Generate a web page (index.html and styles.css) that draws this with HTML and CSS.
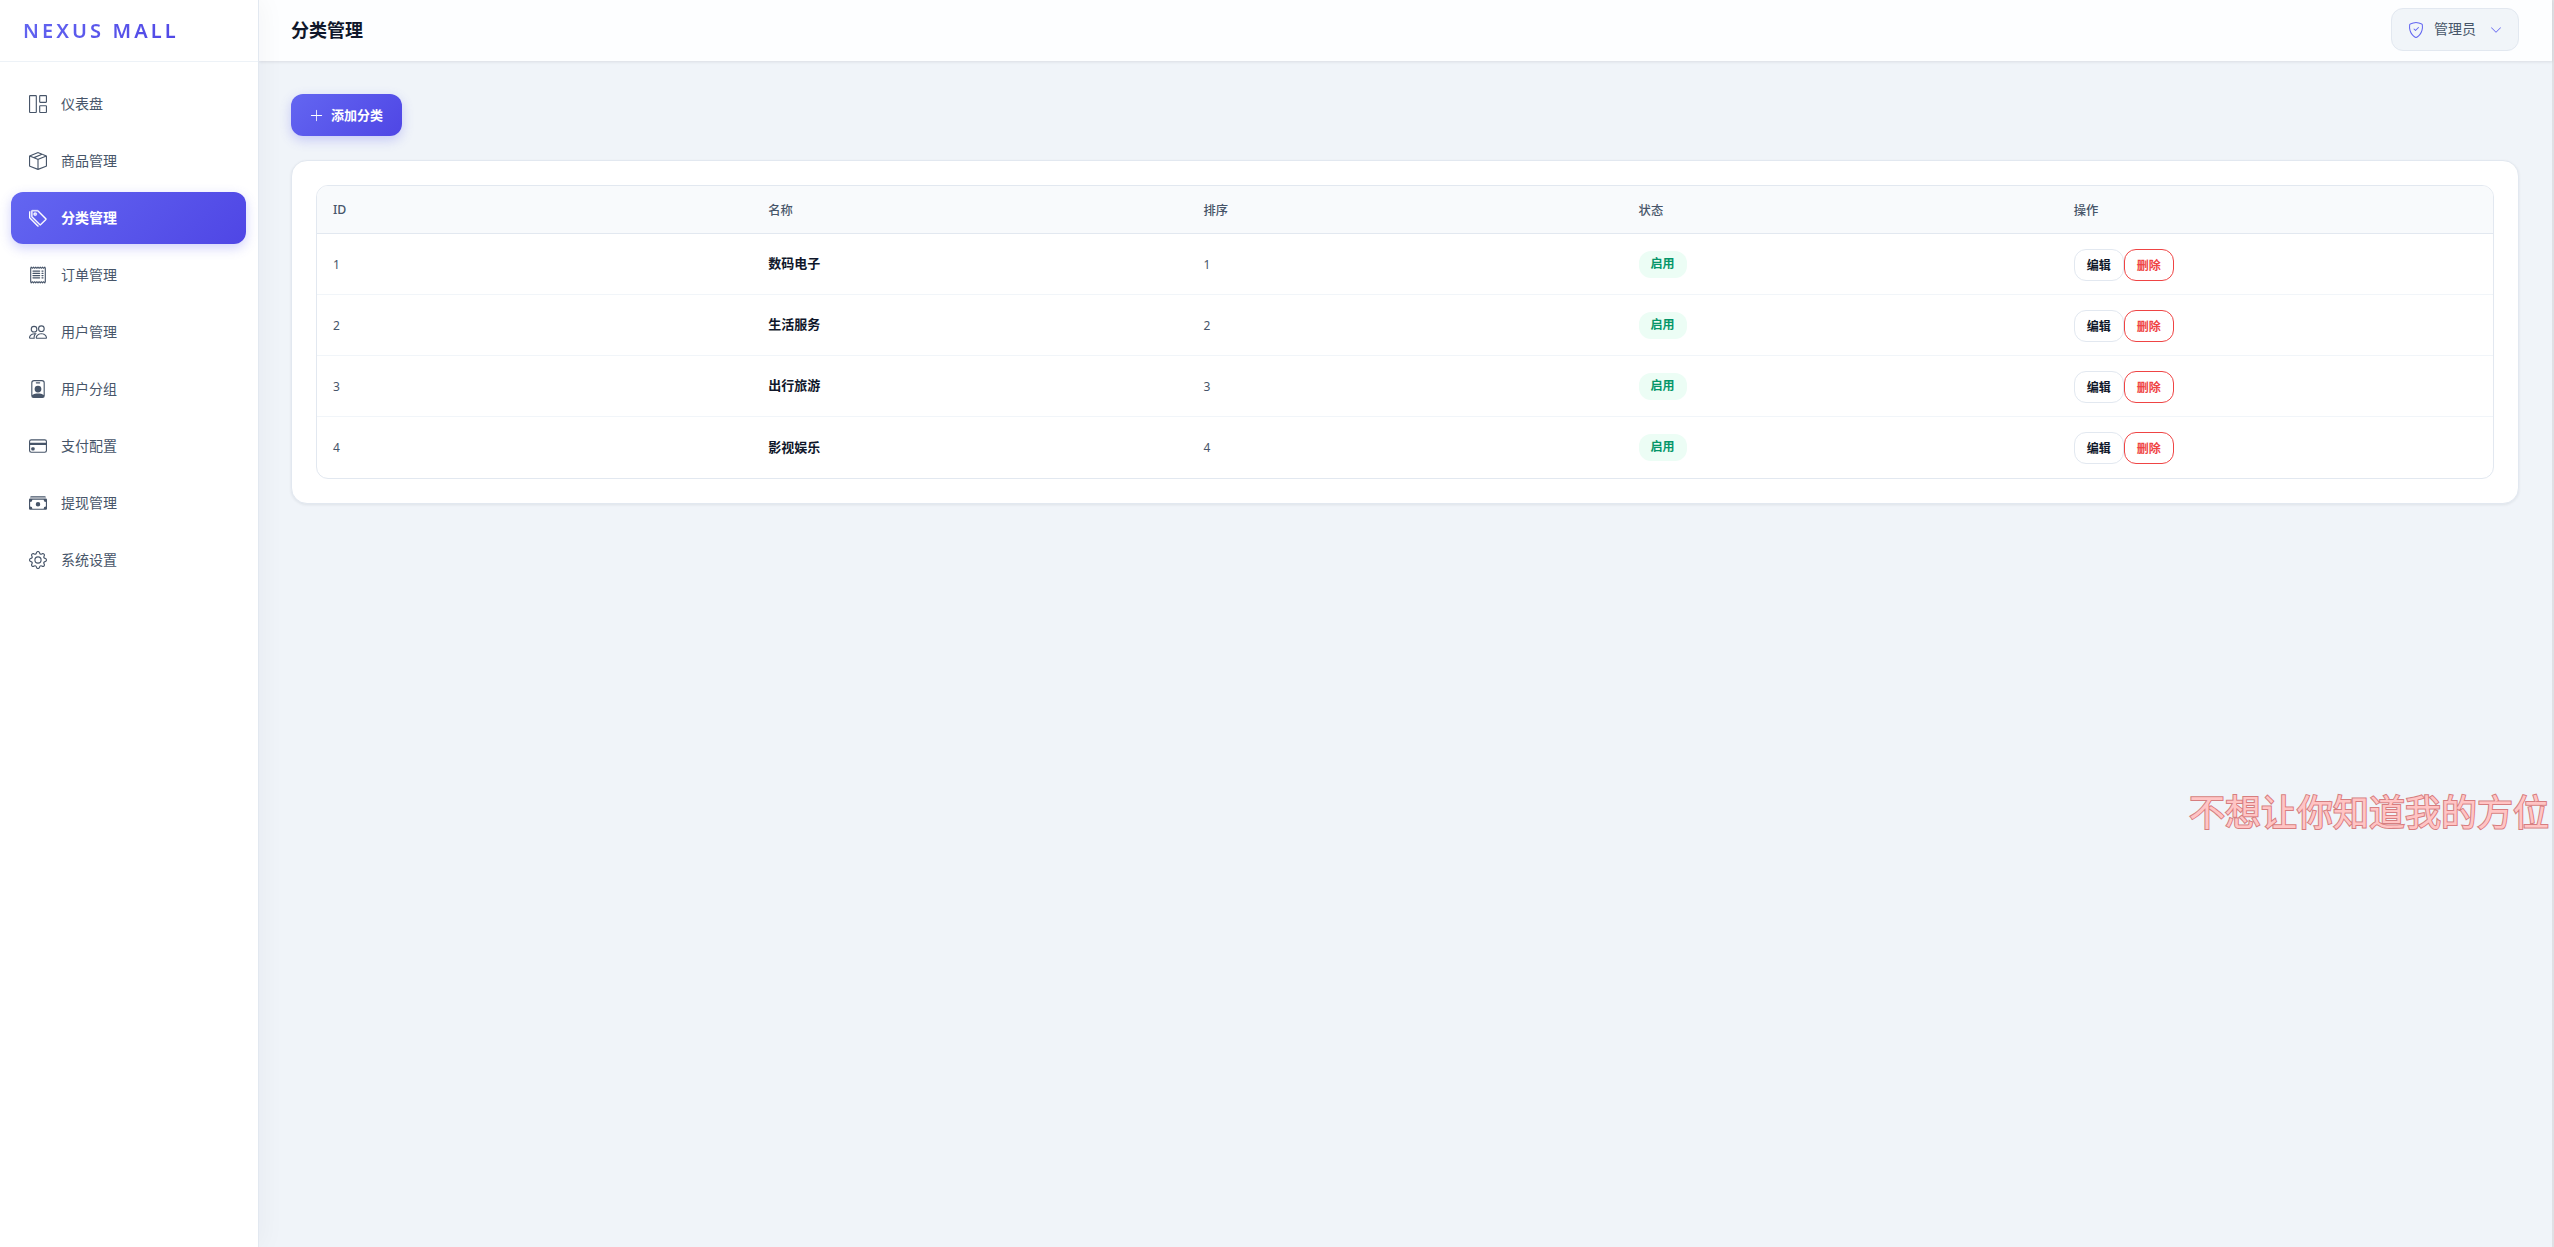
FILE: index.html
```html
<!DOCTYPE html>
<html lang="zh-CN">
<head>
<meta charset="utf-8">
<title>分类管理 - NEXUS MALL</title>
<link rel="stylesheet" href="styles.css">
</head>
<body>
<div class="app">
  <aside class="sidebar">
    <div class="brand"><span class="brand-text">NEXUS MALL</span></div>
    <nav class="nav">
      <a class="nav-item"><svg class="icon" viewBox="0 0 16 16"><path d="M6 1H1v14h5zm9 0h-5v5h5zm0 9v5h-5v-5zM0 1a1 1 0 0 1 1-1h5a1 1 0 0 1 1 1v14a1 1 0 0 1-1 1H1a1 1 0 0 1-1-1zm9 0a1 1 0 0 1 1-1h5a1 1 0 0 1 1 1v5a1 1 0 0 1-1 1h-5a1 1 0 0 1-1-1zm1 8a1 1 0 0 0-1 1v5a1 1 0 0 0 1 1h5a1 1 0 0 0 1-1v-5a1 1 0 0 0-1-1z"/></svg><span>仪表盘</span></a>
      <a class="nav-item"><svg class="icon" viewBox="0 0 16 16"><path d="M8.186 1.113a.5.5 0 0 0-.372 0L1.846 3.5l2.404.961L10.404 2zm3.564 1.426L5.596 5 8 5.961 14.154 3.5zm3.25 1.7-6.5 2.6v7.922l6.5-2.6V4.24zM7.5 14.762V6.838L1 4.239v7.923zM7.443.184a1.5 1.5 0 0 1 1.114 0l7.129 2.852A.5.5 0 0 1 16 3.5v8.662a1 1 0 0 1-.629.928l-7.185 2.874a.5.5 0 0 1-.372 0L.63 13.09a1 1 0 0 1-.63-.928V3.5a.5.5 0 0 1 .314-.464z"/></svg><span>商品管理</span></a>
      <a class="nav-item active"><svg class="icon" viewBox="0 0 16 16"><path d="M3 2v4.586l7 7L14.586 9l-7-7zM2 2a1 1 0 0 1 1-1h4.586a1 1 0 0 1 .707.293l7 7a1 1 0 0 1 0 1.414l-4.586 4.586a1 1 0 0 1-1.414 0l-7-7A1 1 0 0 1 2 6.586z"/><path d="M5.5 5a.5.5 0 1 1 0-1 .5.5 0 0 1 0 1m0 1a1.5 1.5 0 1 0 0-3 1.5 1.5 0 0 0 0 3M1 7.086a1 1 0 0 0 .293.707L8.75 15.25l-.043.043a1 1 0 0 1-1.414 0l-7-7A1 1 0 0 1 0 7.586V3a1 1 0 0 1 1-1z"/></svg><span>分类管理</span></a>
      <a class="nav-item"><svg class="icon" viewBox="0 0 16 16"><path d="M1.92.506a.5.5 0 0 1 .434.14L3 1.293l.646-.647a.5.5 0 0 1 .708 0L5 1.293l.646-.647a.5.5 0 0 1 .708 0L7 1.293l.646-.647a.5.5 0 0 1 .708 0L9 1.293l.646-.647a.5.5 0 0 1 .708 0l.646.647.646-.647a.5.5 0 0 1 .708 0l.646.647.646-.647a.5.5 0 0 1 .801.13l.5 1A.5.5 0 0 1 15 2v12a.5.5 0 0 1-.053.224l-.5 1a.5.5 0 0 1-.8.13L13 14.707l-.646.647a.5.5 0 0 1-.708 0L11 14.707l-.646.647a.5.5 0 0 1-.708 0L9 14.707l-.646.647a.5.5 0 0 1-.708 0L7 14.707l-.646.647a.5.5 0 0 1-.708 0L5 14.707l-.646.647a.5.5 0 0 1-.708 0L3 14.707l-.646.647a.5.5 0 0 1-.801-.13l-.5-1A.5.5 0 0 1 1 14V2a.5.5 0 0 1 .053-.224l.5-1a.5.5 0 0 1 .367-.27m.217 1.338L2 2.118v11.764l.137.274.51-.51a.5.5 0 0 1 .707 0l.646.647.646-.646a.5.5 0 0 1 .708 0l.646.646.646-.646a.5.5 0 0 1 .708 0l.646.646.646-.646a.5.5 0 0 1 .708 0l.646.646.646-.646a.5.5 0 0 1 .708 0l.646.646.646-.646a.5.5 0 0 1 .708 0l.509.509.137-.274V2.118l-.137-.274-.51.51a.5.5 0 0 1-.707 0L12 1.707l-.646.647a.5.5 0 0 1-.708 0L10 1.707l-.646.647a.5.5 0 0 1-.708 0L8 1.707l-.646.647a.5.5 0 0 1-.708 0L6 1.707l-.646.647a.5.5 0 0 1-.708 0L4 1.707l-.646.647a.5.5 0 0 1-.708 0z"/><path class="line" d="M3.5 4.5h6m-6 2h6m-6 2h6m-6 2h6m2-6h1m-1 2h1m-1 2h1m-1 2h1"/></svg><span>订单管理</span></a>
      <a class="nav-item"><svg class="icon" viewBox="0 0 16 16"><path d="M15 14s1 0 1-1-1-4-5-4-5 3-5 4 1 1 1 1zm-7.978-1L7 12.996c.001-.264.167-1.03.76-1.72C8.312 10.629 9.282 10 11 10c1.717 0 2.687.63 3.24 1.276.593.69.758 1.457.76 1.72l-.008.002-.014.002zM11 7a2 2 0 1 0 0-4 2 2 0 0 0 0 4m3-2a3 3 0 1 1-6 0 3 3 0 0 1 6 0M6.936 9.28a6 6 0 0 0-1.23-.247A7 7 0 0 0 5 9c-4 0-5 3-5 4q0 1 1 1h4.216A2.24 2.24 0 0 1 5 13c0-1.01.377-2.042 1.09-2.904.243-.294.526-.569.846-.816M4.92 10A5.5 5.5 0 0 0 4 13H1c0-.26.164-1.03.76-1.724.545-.636 1.492-1.256 3.16-1.275ZM1.5 5.5a3 3 0 1 1 6 0 3 3 0 0 1-6 0m3-2a2 2 0 1 0 0 4 2 2 0 0 0 0-4"/></svg><span>用户管理</span></a>
      <a class="nav-item"><svg class="icon" viewBox="0 0 16 16"><path d="M6.5 2a.5.5 0 0 0 0 1h3a.5.5 0 0 0 0-1zM11 8a3 3 0 1 1-6 0 3 3 0 0 1 6 0"/><path d="M4.5 0A2.5 2.5 0 0 0 2 2.5V14a2 2 0 0 0 2 2h8a2 2 0 0 0 2-2V2.5A2.5 2.5 0 0 0 11.5 0zM3 2.5A1.5 1.5 0 0 1 4.5 1h7A1.5 1.5 0 0 1 13 2.5v10.795a4.2 4.2 0 0 0-.776-.492C11.392 12.387 10.063 12 8 12s-3.392.387-4.224.803a4.2 4.2 0 0 0-.776.492z"/></svg><span>用户分组</span></a>
      <a class="nav-item"><svg class="icon" viewBox="0 0 16 16"><path d="M0 4a2 2 0 0 1 2-2h12a2 2 0 0 1 2 2v8a2 2 0 0 1-2 2H2a2 2 0 0 1-2-2zm2-1a1 1 0 0 0-1 1v1h14V4a1 1 0 0 0-1-1zm13 4H1v5a1 1 0 0 0 1 1h12a1 1 0 0 0 1-1z"/><path d="M2 10a1 1 0 0 1 1-1h1a1 1 0 0 1 1 1v1a1 1 0 0 1-1 1H3a1 1 0 0 1-1-1z"/></svg><span>支付配置</span></a>
      <a class="nav-item"><svg class="icon" viewBox="0 0 16 16"><path d="M1 3a1 1 0 0 1 1-1h12a1 1 0 0 1 1 1zm7 8a2 2 0 1 0 0-4 2 2 0 0 0 0 4"/><path d="M0 5a1 1 0 0 1 1-1h14a1 1 0 0 1 1 1v8a1 1 0 0 1-1 1H1a1 1 0 0 1-1-1zm3 0a2 2 0 0 1-2 2v4a2 2 0 0 1 2 2h10a2 2 0 0 1 2-2V7a2 2 0 0 1-2-2z"/></svg><span>提现管理</span></a>
      <a class="nav-item"><svg class="icon" viewBox="0 0 16 16"><path d="M8 4.754a3.246 3.246 0 1 0 0 6.492 3.246 3.246 0 0 0 0-6.492M5.754 8a2.246 2.246 0 1 1 4.492 0 2.246 2.246 0 0 1-4.492 0"/><path d="M9.796 1.343c-.527-1.79-3.065-1.79-3.592 0l-.094.319a.873.873 0 0 1-1.255.52l-.292-.16c-1.64-.892-3.433.902-2.54 2.541l.159.292a.873.873 0 0 1-.52 1.255l-.319.094c-1.79.527-1.79 3.065 0 3.592l.319.094a.873.873 0 0 1 .52 1.255l-.16.292c-.892 1.64.901 3.434 2.541 2.54l.292-.159a.873.873 0 0 1 1.255.52l.094.319c.527 1.79 3.065 1.79 3.592 0l.094-.319a.873.873 0 0 1 1.255-.52l.292.16c1.64.893 3.434-.902 2.54-2.541l-.159-.292a.873.873 0 0 1 .52-1.255l.319-.094c1.79-.527 1.79-3.065 0-3.592l-.319-.094a.873.873 0 0 1-.52-1.255l.16-.292c.893-1.64-.902-3.433-2.541-2.54l-.292.159a.873.873 0 0 1-1.255-.52zm-2.633.283c.246-.835 1.428-.835 1.674 0l.094.319a1.873 1.873 0 0 0 2.693 1.115l.291-.16c.764-.415 1.6.42 1.184 1.185l-.159.292a1.873 1.873 0 0 0 1.116 2.692l.318.094c.835.246.835 1.428 0 1.674l-.319.094a1.873 1.873 0 0 0-1.115 2.693l.16.291c.415.764-.42 1.6-1.185 1.184l-.291-.159a1.873 1.873 0 0 0-2.693 1.116l-.094.318c-.246.835-1.428.835-1.674 0l-.094-.319a1.873 1.873 0 0 0-2.692-1.115l-.292.16c-.764.415-1.6-.42-1.184-1.185l.159-.291A1.873 1.873 0 0 0 1.945 8.93l-.319-.094c-.835-.246-.835-1.428 0-1.674l.319-.094A1.873 1.873 0 0 0 3.06 4.377l-.16-.292c-.415-.764.42-1.6 1.185-1.184l.292.159a1.873 1.873 0 0 0 2.692-1.115z"/></svg><span>系统设置</span></a>
    </nav>
  </aside>
  <div class="main">
    <header class="topbar">
      <h1 class="title">分类管理</h1>
      <button class="user">
        <svg class="user-icon" viewBox="0 0 16 16"><path d="M5.338 1.59a61 61 0 0 0-2.837.856.48.48 0 0 0-.328.39c-.554 4.157.726 7.19 2.253 9.188a10.7 10.7 0 0 0 2.287 2.233c.346.244.652.42.893.533q.18.085.293.118a1 1 0 0 0 .101.025 1 1 0 0 0 .1-.025q.114-.034.294-.118c.24-.113.547-.29.893-.533a10.7 10.7 0 0 0 2.287-2.233c1.527-1.997 2.807-5.031 2.253-9.188a.48.48 0 0 0-.328-.39c-.651-.213-1.75-.56-2.837-.855C9.552 1.29 8.531 1.067 8 1.067c-.53 0-1.552.223-2.662.524zM5.072.56C6.157.265 7.31 0 8 0s1.843.265 2.928.56c1.11.3 2.229.655 2.887.87a1.54 1.54 0 0 1 1.044 1.262c.596 4.477-.787 7.795-2.465 9.99a11.8 11.8 0 0 1-2.517 2.453 7 7 0 0 1-1.048.625c-.28.132-.581.24-.829.24s-.548-.108-.829-.24a7 7 0 0 1-1.048-.625 11.8 11.8 0 0 1-2.517-2.453C1.928 10.487.545 7.169 1.141 2.692A1.54 1.54 0 0 1 2.185 1.43 63 63 0 0 1 5.072.56"/><path d="M10.854 5.146a.5.5 0 0 1 0 .708l-3 3a.5.5 0 0 1-.708 0l-1.5-1.5a.5.5 0 1 1 .708-.708L7.5 7.793l2.646-2.647a.5.5 0 0 1 .708 0"/></svg>
        <span>管理员</span>
        <svg class="chevron" viewBox="0 0 16 16"><path d="M1.646 4.646a.5.5 0 0 1 .708 0L8 10.293l5.646-5.647a.5.5 0 0 1 .708.708l-6 6a.5.5 0 0 1-.708 0l-6-6a.5.5 0 0 1 0-.708"/></svg>
      </button>
    </header>
    <main class="content">
      <button class="add"><svg class="plus" viewBox="0 0 16 16"><path d="M8 1a.5.5 0 0 1 .5.5v6h6a.5.5 0 0 1 0 1h-6v6a.5.5 0 0 1-1 0v-6h-6a.5.5 0 0 1 0-1h6v-6A.5.5 0 0 1 8 1"/></svg><span>添加分类</span></button>
      <section class="card">
        <div class="table">
          <div class="row head"><span>ID</span><span>名称</span><span>排序</span><span>状态</span><span>操作</span></div>
          <div class="row"><span>1</span><span class="name">数码电子</span><span>1</span><span><b class="badge">启用</b></span><span class="actions"><button class="btn">编辑</button><button class="btn danger">删除</button></span></div>
          <div class="row"><span>2</span><span class="name">生活服务</span><span>2</span><span><b class="badge">启用</b></span><span class="actions"><button class="btn">编辑</button><button class="btn danger">删除</button></span></div>
          <div class="row"><span>3</span><span class="name">出行旅游</span><span>3</span><span><b class="badge">启用</b></span><span class="actions"><button class="btn">编辑</button><button class="btn danger">删除</button></span></div>
          <div class="row"><span>4</span><span class="name">影视娱乐</span><span>4</span><span><b class="badge">启用</b></span><span class="actions"><button class="btn">编辑</button><button class="btn danger">删除</button></span></div>
        </div>
      </section>
    </main>
  </div>
</div>
<div class="watermark">不想让你知道我的方位</div>
</body>
</html>
```
FILE: styles.css
```css
* { box-sizing: border-box; }
body {
  margin: 0;
  height: 1247px;
  overflow: hidden;
  background: #f0f4f9;
  color: #475569;
  font-family: "Noto Sans", "Noto Sans CJK SC", sans-serif;
  font-size: 14px;
}
button { font-family: inherit; margin: 0; }
svg { fill: currentColor; flex: none; display: block; }
.app { display: flex; height: 100%; border-right: 2px solid #dfe1e5; }

.sidebar {
  width: 259px;
  flex: none;
  background: #fff;
  border-right: 1px solid #e2e8f0;
  box-shadow: 4px 0 24px rgba(15, 23, 42, .04);
  z-index: 1;
}
.brand {
  height: 62px;
  padding: 0 23px;
  display: flex;
  align-items: center;
  border-bottom: 1px solid #edf2f7;
}
.brand-text {
  font-size: 20px;
  font-weight: 600;
  letter-spacing: 3.1px;
  line-height: 28px;
  background: linear-gradient(135deg, #6366f1, #4f46e5);
  -webkit-background-clip: text;
  background-clip: text;
  color: transparent;
}
.nav { padding: 16px 12px 0 11px; display: flex; flex-direction: column; gap: 5px; }
.nav-item {
  height: 52px;
  padding: 0 18px;
  display: flex;
  align-items: center;
  gap: 14px;
  border-radius: 12px;
  font-size: 14px;
}
.nav-item span { padding-bottom: 2px; }
.nav-item.active {
  color: #fff;
  font-weight: 700;
  background: linear-gradient(135deg, #6366f1, #4f46e5);
  box-shadow: 0 4px 12px rgba(99, 102, 241, .3);
}
.icon { width: 18px; height: 18px; }
.active .icon { stroke: currentColor; stroke-width: .3; }
.line { fill: none; stroke: currentColor; stroke-linecap: round; }

.main { flex: 1; min-width: 0; }
.topbar {
  height: 61px;
  padding: 0 33px 2px 32px;
  display: flex;
  align-items: center;
  justify-content: space-between;
  background: #fdfeff;
  box-shadow: 0 1px 3px rgba(15, 23, 42, .1);
}
.title { margin: 0; padding-bottom: 2px; font-size: 18px; font-weight: 700; color: #0f172a; }
.user {
  height: 43px;
  width: 128px;
  padding: 0 16px;
  display: flex;
  align-items: center;
  border: 1px solid #e2e8f0;
  border-radius: 12px;
  background: #f1f5f9;
  color: #475569;
  font-size: 14px;
}
.user span { padding-bottom: 3px; }
.user-icon { width: 16px; height: 16px; color: #6366f1; margin-right: 10px; }
.chevron { width: 12px; height: 12px; color: #6366f1; margin-left: auto; }

.content { padding: 33px 33px 33px 32px; }
.add {
  display: flex;
  align-items: center;
  gap: 8px;
  width: 111px;
  height: 42px;
  padding: 0 0 0 19px;
  border: 0;
  border-radius: 12px;
  color: #fff;
  font-size: 13px;
  font-weight: 700;
  background: linear-gradient(135deg, #6366f1, #4f46e5);
  box-shadow: 0 4px 12px rgba(99, 102, 241, .3);
}
.add span { padding-bottom: 2px; }
.plus { width: 13px; height: 13px; }
.card {
  margin-top: 24px;
  padding: 24px;
  background: #fff;
  border: 1px solid #e2e8f0;
  border-radius: 16px;
  box-shadow: 0 1px 3px rgba(15, 23, 42, .08);
}
.table { border: 1px solid #e2e8f0; border-radius: 12px; overflow: hidden; }
.row {
  display: grid;
  grid-template-columns: repeat(5, 1fr);
  align-items: center;
  height: 61px;
  border-bottom: 1px solid #f1f5f9;
  font-size: 12px;
}
.row:last-child { border-bottom: 0; }
.row > span { padding-left: 16px; }
.head { height: 48px; background: #f8fafc; border-bottom-color: #e2e8f0; font-size: 12.3px; font-weight: 500; }
.row .name { padding-bottom: 3px; font-size: 13px; font-weight: 600; color: #0f172a; }
.badge {
  display: block;
  width: 48px;
  height: 27px;
  line-height: 26px;
  text-align: center;
  border-radius: 12px;
  background: #ecfdf5;
  color: #059669;
  font-size: 12px;
  font-weight: 600;
}
.actions { display: flex; padding-top: 1px; }
.btn {
  width: 50px;
  height: 32px;
  padding: 0;
  border: 1px solid #e2e8f0;
  border-radius: 12px;
  background: #fff;
  color: #0f172a;
  font-size: 12px;
  font-weight: 600;
}
.danger { border-color: #ef4444; color: #ef4444; }

.watermark {
  position: absolute;
  right: 5px;
  top: 784px;
  font-family: "Noto Sans CJK SC", sans-serif;
  font-size: 36px;
  font-weight: 400;
  line-height: 52px;
  white-space: nowrap;
  color: #ffc4c4;
  -webkit-text-stroke: 2px #d67e80;
  paint-order: stroke fill;
}
```
